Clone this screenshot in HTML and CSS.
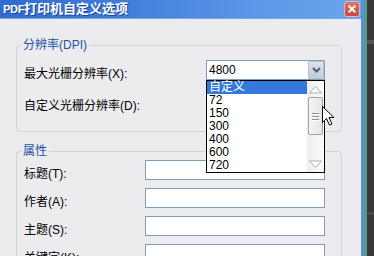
FILE: index.html
```html
<!DOCTYPE html>
<html>
<head>
<meta charset="utf-8">
<link rel="stylesheet" href="styles.css">
</head>
<body>
<div class="screen">
  <div class="window">
    <div class="titlebar">
      <span class="title"><span class="latin">PDF</span>打印机自定义选项</span>
      <span class="close">
        <svg width="16" height="16" viewBox="0 0 16 16">
          <path d="M5 5 L11 11 M11 5 L5 11" stroke="#fff" stroke-width="2.2" stroke-linecap="square"/>
        </svg>
      </span>
    </div>
    <div class="client">
      <fieldset class="group g1">
        <legend>分辨率(DPI)</legend>
        <div class="rows">
          <div class="row">
            <span class="lbl">最大光栅分辨率(X):</span>
            <div class="combo">
              <span class="combo-text">4800</span>
              <span class="combo-btn">
                <svg width="9" height="6" viewBox="0 0 9 6"><path d="M1 1 L4.5 4.5 L8 1" fill="none" stroke="#4a5d80" stroke-width="2"/></svg>
              </span>
              <div class="dropdown">
                <div class="items">
                  <div class="item sel">自定义</div>
                  <div class="item">72</div>
                  <div class="item">150</div>
                  <div class="item">300</div>
                  <div class="item">400</div>
                  <div class="item">600</div>
                  <div class="item">720</div>
                </div>
                <div class="vscroll">
                  <div class="sb-btn">
                    <svg width="15" height="9" viewBox="0 0 15 9"><path d="M1.5 8 L7.5 1.5 L13.5 8 Z" fill="#fff" stroke="#a7abb2" stroke-width="1"/></svg>
                  </div>
                  <div class="sb-track">
                    <div class="sb-thumb"><span class="grip"></span><span class="grip"></span><span class="grip"></span></div>
                  </div>
                  <div class="sb-btn">
                    <svg width="15" height="9" viewBox="0 0 15 9"><path d="M1.5 1 L7.5 7.5 L13.5 1 Z" fill="#fff" stroke="#a7abb2" stroke-width="1"/></svg>
                  </div>
                </div>
              </div>
            </div>
          </div>
          <div class="row">
            <span class="lbl">自定义光栅分辨率(D):</span>
            <div class="edit edit-dpi"></div>
          </div>
        </div>
      </fieldset>
      <fieldset class="group g2">
        <legend>属性</legend>
        <div class="rows rows2">
          <div class="row"><span class="lbl">标题(T):</span><div class="edit"></div></div>
          <div class="row"><span class="lbl">作者(A):</span><div class="edit"></div></div>
          <div class="row"><span class="lbl">主题(S):</span><div class="edit"></div></div>
          <div class="row"><span class="lbl">关键字(K):</span><div class="edit"></div></div>
        </div>
      </fieldset>
    </div>
  </div>
  <div class="teal"></div>
  <div class="desk"><div class="band b1"></div><div class="band b2"></div></div>
</div>
<svg class="cursor" width="13" height="20" viewBox="0 0 13 20">
  <path d="M0.5 0.5 L0.5 16.5 L4.5 12.5 L7.5 19 L10 18 L7 11.5 L12 11.5 Z" fill="#fff" stroke="#000" stroke-width="1" stroke-linejoin="miter"/>
</svg>
</body>
</html>
```

FILE: styles.css
```css
* { box-sizing: border-box; }
html, body {
  margin: 0;
  padding: 0;
  width: 374px;
  height: 256px;
  overflow: hidden;
  background: #353535;
  font-family: "Liberation Sans", "Noto Sans CJK SC", sans-serif;
  font-size: 12px;
}
.screen {
  display: flex;
  height: 256px;
  position: relative;
}
.window {
  width: 364px;
  height: 256px;
  display: flex;
  flex-direction: column;
  border-right: 3px solid #5b8fd9;
  flex: none;
}
.titlebar {
  height: 19px;
  flex: none;
  display: flex;
  align-items: center;
  justify-content: space-between;
  padding: 0 1px 0 3px;
  background: linear-gradient(to right, #2f6bd1 0%, #3f7fdc 35%, #5b97e7 70%, #6aa5ee 100%);
  border-bottom: 1px solid #7aa7e3;
}
.title {
  color: #fff;
  font-weight: bold;
  font-size: 13px;
  line-height: 15px;
  font-family: "Liberation Sans", "Noto Sans CJK SC", sans-serif;
  text-shadow: 1px 1px 0 #1c4597;
}
.title .latin {
  font-size: 11px;
  letter-spacing: -0.3px;
}
.close {
  width: 16px;
  height: 16px;
  border-radius: 3px;
  background: linear-gradient(#d9786f, #c24a3e);
  border: 1px solid #e9b3ad;
  display: flex;
  align-items: center;
  justify-content: center;
  margin-top: 0;
}
.close svg { width: 14px; height: 14px; }
.client {
  flex: 1;
  background: #ececef;
  padding: 19px 19px 0 16px;
  display: flex;
  flex-direction: column;
}
.group {
  margin: 0;
  padding: 0;
  border: 1px solid #d3d3d0;
  border-radius: 4px;
  min-width: 0;
}
.group legend {
  margin-left: 4px;
  padding: 0 2px;
  color: #2352a6;
  line-height: 14px;
  font-size: 12px;
}
.g2 { margin-top: 12px; flex: 1; border-bottom: none; border-bottom-left-radius: 0; border-bottom-right-radius: 0; }
.rows {
  display: flex;
  flex-direction: column;
  gap: 12px;
  padding: 8px 16px 19px 7px;
}
.rows2 {
  gap: 8px;
  padding-top: 2px;
}
.row {
  display: flex;
  align-items: flex-start;
  height: 20px;
}
.lbl {
  line-height: 14px;
  margin-top: 7px;
  color: #000;
  white-space: nowrap;
}
.combo, .edit {
  margin-left: auto;
  height: 20px;
  background: #fff;
  border: 1px solid #7f9db9;
}
.combo {
  width: 119px;
  position: relative;
  display: flex;
  align-items: center;
}
.combo-text {
  padding-left: 2px;
  line-height: 14px;
  flex: 1;
}
.combo-btn {
  width: 16px;
  height: 18px;
  margin-right: 0;
  background: linear-gradient(#dde3ec, #c3cbd8);
  border: 1px solid #b7c2d3;
  border-radius: 1px;
  display: flex;
  align-items: center;
  justify-content: center;
}
.edit { width: 180px; }
.edit-dpi { width: 119px; }
.dropdown {
  position: absolute;
  left: -1px;
  top: 19px;
  width: 119px;
  height: 93px;
  border: 1px solid #000;
  background: #fff;
  z-index: 10;
  display: flex;
}
.items {
  flex: 1;
  display: flex;
  flex-direction: column;
}
.item {
  height: 13px;
  line-height: 13px;
  padding-left: 2px;
  color: #000;
}
.item.sel {
  background: #3478dc;
  color: #fff;
}
.vscroll {
  width: 17px;
  display: flex;
  flex-direction: column;
  background: linear-gradient(to right, #eeeeef, #fbfbfb);
}
.sb-btn {
  height: 16px;
  display: flex;
  align-items: center;
  justify-content: center;
}
.sb-track {
  flex: 1;
  padding: 0 1px;
}
.sb-thumb {
  height: 38px;
  border: 1px solid #9ea4ae;
  border-radius: 2px;
  background: linear-gradient(to right, #f4f4f5, #e4e5e8);
  display: flex;
  flex-direction: column;
  align-items: center;
  justify-content: center;
  gap: 2px;
}
.grip {
  width: 7px;
  height: 1px;
  background: #8e939b;
  box-shadow: 0 1px 0 #fff;
}
.teal {
  width: 3px;
  background: #4f9b8c;
  flex: none;
}
.desk {
  flex: 1;
  background: #383838;
  display: flex;
  flex-direction: column;
}
.band.b1 { margin-top: 40px; height: 4px; background: #555; }
.band.b2 { margin-top: 168px; height: 3px; background: #4a4a4a; }
.cursor {
  position: absolute;
  left: 322px;
  top: 106px;
  z-index: 20;
}
```
